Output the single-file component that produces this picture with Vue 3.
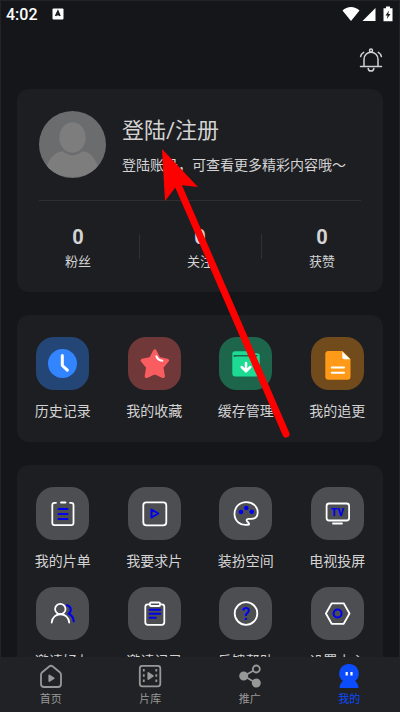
<script setup>
const stats = [
  { label: '粉丝', value: 0 },
  { label: '关注', value: 0 },
  { label: '获赞', value: 0 },
]
const shortcuts = [
  { id: 'history', label: '历史记录' },
  { id: 'favorite', label: '我的收藏' },
  { id: 'cache', label: '缓存管理' },
  { id: 'follow', label: '我的追更' },
]
const tools = [
  { id: 'list', label: '我的片单' },
  { id: 'request', label: '我要求片' },
  { id: 'theme', label: '装扮空间' },
  { id: 'cast', label: '电视投屏' },
  { id: 'invite', label: '邀请好友' },
  { id: 'record', label: '邀请记录' },
  { id: 'help', label: '反馈帮助' },
  { id: 'settings', label: '设置中心' },
]
const tabs = [
  { id: 'home', label: '首页' },
  { id: 'library', label: '片库' },
  { id: 'share', label: '推广' },
  { id: 'mine', label: '我的' },
]
const activeTab = 'mine'
</script>

<template>
  <div class="page">
    <header class="status">
      <span class="time">4:02</span>
      <svg class="keyboard" viewBox="0 0 12 12" aria-hidden="true">
        <rect x="0.5" y="0.5" width="11" height="11" rx="1" fill="#fff" />
        <path d="M3.6 8 5.900 3.200 8 8M4.400 6.600H7.400" fill="none" stroke="#17181b" stroke-width="1.600" />
      </svg>
      <svg class="signals" viewBox="0 0 52 16" aria-hidden="true">
        <path d="M0.5 4.500C5-.2 13-.2 17.500 4.500L9 15Z" fill="#fff" />
        <path d="M20.500 15 33.500 2V15Z" fill="#fff" />
        <path d="M44 .5h4v1.700h2.500V15.300H41.500V2.200H44Z" fill="#fff" />
        <path d="M47 4.500 43.500 9.500H45.600L44.800 13 48.500 8H46.300Z" fill="#17181b" />
      </svg>
    </header>

    <main class="content">
      <div class="toolbar">
        <button class="bell" type="button" aria-label="消息">
          <svg viewBox="0 0 24 24" fill="none" stroke="#d0d0d0" stroke-width="1.500" stroke-linecap="round">
            <circle cx="12" cy="2.600" r="1.500" />
            <path d="M5 18.300V11.200a7 7 0 0 1 14 0V18.300M1.500 18.600h21M9.200 20.400c.2 3.600 5.400 3.600 5.600 0M4.700 4.400C3 5.400 1.900 6.900 1.600 8.600M19.300 4.400c1.700 1 2.800 2.500 3.100 4.200" />
          </svg>
        </button>
      </div>

      <section class="card profile">
        <a class="account" href="#login">
          <svg class="avatar" viewBox="0 0 66 66" aria-hidden="true">
            <defs><clipPath id="avatar-clip"><circle cx="33" cy="33" r="33" /></clipPath></defs>
            <circle cx="33" cy="33" r="33" fill="#6b6c6e" />
            <g clip-path="url(#avatar-clip)">
              <path d="M7 55C11 45 18 39 24 40c5 5 13 5 18 0 7-1 12 5 16 14-6 8-14 11-25 11S13 62 7 55Z" fill="#7d7d7e" />
              <ellipse cx="33" cy="27" rx="14" ry="16" fill="#6b6c6e" />
              <ellipse cx="33" cy="26" rx="13" ry="15" fill="#7d7d7e" />
            </g>
          </svg>
          <span class="intro">
            <span class="title">登陆/注册</span>
            <span class="hint">登陆账号，可查看更多精彩内容哦～</span>
          </span>
        </a>
        <div class="stats">
          <a v-for="s in stats" :key="s.label" class="stat" href="#stats">
            <strong>{{ s.value }}</strong>
            <span>{{ s.label }}</span>
          </a>
        </div>
      </section>

      <nav class="card grid">
        <button v-for="item in shortcuts" :key="item.id" class="entry" type="button">
          <svg class="tile" :class="item.id" viewBox="0 0 53 53" aria-hidden="true">
            <g v-if="item.id === 'history'">
              <circle cx="26.500" cy="26.500" r="14.500" fill="#3285ff" />
              <path d="M26.300 18.500V28.500L31.300 33.200" fill="none" stroke="#fff" stroke-width="3" stroke-linecap="round" stroke-linejoin="round" />
            </g>
            <g v-else-if="item.id === 'favorite'">
              <path d="M26.800 14 30.800 21.800 39.300 23.500 33.700 30.200 35.200 39.300 26.800 35.500 18.400 39.300 19.900 30.200 14.300 23.500 22.800 21.800Z" fill="#fa5d60" stroke="#fa5d60" stroke-width="3.500" stroke-linejoin="round" />
              <path d="M28.300 19.200C29.300 22 31.500 23.500 34.300 23.700" fill="none" stroke="#fff" stroke-width="2" stroke-linecap="round" />
            </g>
            <g v-else-if="item.id === 'cache'">
              <path d="M16 14.300H28L30.500 16.300H38A2.700 2.700 0 0 1 40.700 19V36.500A3 3 0 0 1 37.700 39.500H16.300A3 3 0 0 1 13.300 36.500V17A2.700 2.700 0 0 1 16 14.300Z" fill="#1ddb93" />
              <path d="M15.500 20V18.800H38.500" fill="none" stroke="#1d664c" stroke-width="1.600" />
              <path d="M27 26V34M22.700 30 27 34.300 31.300 30" fill="none" stroke="#fff" stroke-width="2.500" stroke-linecap="round" stroke-linejoin="round" />
            </g>
            <g v-else>
              <path d="M17.300 14H31.500L39.500 22V39.800A3 3 0 0 1 36.500 42.800H17.300A3 3 0 0 1 14.300 39.800V17A3 3 0 0 1 17.300 14Z" fill="#ff9a18" />
              <path d="M31.300 14.500 39.200 22.200H33.300A2 2 0 0 1 31.300 20.200Z" fill="#fff" />
              <path d="M20.800 30.500H33M20.800 35.800H33" stroke="#fff" stroke-width="2" stroke-linecap="round" />
            </g>
          </svg>
          <span>{{ item.label }}</span>
        </button>
      </nav>

      <nav class="card grid">
        <button v-for="item in tools" :key="item.id" class="entry" type="button">
          <svg class="tile" viewBox="0 0 53 53" fill="none" stroke="#fff" stroke-width="1.800" stroke-linecap="round" stroke-linejoin="round" aria-hidden="true">
            <g v-if="item.id === 'list'">
              <path d="M20 15.800H18.500A2.300 2.300 0 0 0 16.300 18V36A2.300 2.300 0 0 0 18.500 38.200H35.300A2.300 2.300 0 0 0 37.500 36V18A2.300 2.300 0 0 0 35.300 15.800H34M25 15.500H29.500" />
              <path class="accent" d="M22.500 22H31.500M22.500 27H31.500M22.500 32H31.500" />
            </g>
            <g v-else-if="item.id === 'request'">
              <rect x="15.300" y="15.300" width="23" height="23" rx="3" />
              <path class="accent" d="M23.500 22.500 30.300 26.500 23.500 30.500Z" />
            </g>
            <g v-else-if="item.id === 'theme'">
              <path d="M30 37.500C21 39.500 15.500 33.500 15.500 27 15.500 20 20.500 15.200 27.300 15.200 34 15.200 38.700 19.800 38.700 25.200 38.700 29.500 36 31.800 32 31.800H29.500C27.500 31.800 27 33.500 28.500 34.800 30.200 36 30.300 37.200 29.500 37.600Z" />
              <g class="dots">
                <circle cx="22" cy="25" r="2.300" /><circle cx="27.300" cy="21" r="2.300" /><circle cx="32.700" cy="24.800" r="2.300" />
              </g>
            </g>
            <g v-else-if="item.id === 'cast'">
              <rect x="15.600" y="16.500" width="22.500" height="17" rx="2.500" />
              <path d="M22 36.500H31" />
              <text class="glyph tv" x="26.500" y="28.500">TV</text>
            </g>
            <g v-else-if="item.id === 'invite'">
              <path class="accent" d="M31 18.300C35.500 19.500 36 24.500 32.500 26.700 35.700 28 37.500 31 37.800 34.300" />
              <circle cx="24.300" cy="22" r="5.200" />
              <path d="M15.700 35.500C16.200 24.500 32.700 24.500 33.200 35.500" />
            </g>
            <g v-else-if="item.id === 'record'">
              <rect x="17.300" y="17.300" width="19" height="20.500" rx="2.500" />
              <rect x="22" y="15.500" width="10" height="3.500" rx="1" fill="#4d4e51" />
              <path class="accent" d="M21.500 22.800H32.300M21.500 26.800H32.300M21.500 30.800H27.800" />
            </g>
            <g v-else-if="item.id === 'help'">
              <circle cx="27" cy="26.500" r="11.300" />
              <text class="glyph question" x="27" y="33">?</text>
            </g>
            <g v-else>
              <path d="M20.700 16.300H32.700L38.500 26.500 32.700 36.800H20.700L14.900 26.500Z" />
              <circle class="accent" cx="26.600" cy="26.500" r="4" />
            </g>
          </svg>
          <span>{{ item.label }}</span>
        </button>
      </nav>
    </main>

    <nav class="tabbar">
      <a v-for="tab in tabs" :key="tab.id" class="tab" :class="{ active: tab.id === activeTab }" :href="'#' + tab.id">
        <svg viewBox="0 0 24 24" fill="none" stroke="currentColor" stroke-width="1.800" stroke-linejoin="round" aria-hidden="true">
          <g v-if="tab.id === 'home'">
            <path d="M3.200 8.300 10.500 2.300Q12 1.200 13.500 2.300L20.800 8.300Q22 9.300 22 10.800V20Q22 23 19 23H5Q2 23 2 20V10.800Q2 9.300 3.200 8.300Z" />
            <path d="M10.300 11.500 14.700 14.200 10.300 17Z" fill="currentColor" />
          </g>
          <g v-else-if="tab.id === 'library'">
            <rect x="1.800" y="1.800" width="20.500" height="20.500" rx="2.500" />
            <path d="M5.800 5V19.500M18.300 5V19.500" stroke-dasharray="2.500 2.800" />
            <path d="M10.300 9 14.800 12 10.300 15Z" fill="currentColor" />
          </g>
          <g v-else-if="tab.id === 'share'">
            <path d="M15.300 6.800 6 12 18 19" />
            <circle cx="18.300" cy="5" r="3.500" />
            <circle cx="5.700" cy="12" r="3.600" fill="currentColor" /><circle cx="18.300" cy="19" r="3.600" fill="currentColor" />
          </g>
          <g v-else stroke="none">
            <path d="M12 0A9.500 9.500 0 0 0 6 17C3.800 18.500 2.700 21 2.500 24H21.500C21.300 21 20.200 18.500 18 17A9.500 9.500 0 0 0 12 0Z" fill="currentColor" />
            <path d="M8.600 8H10.800V11.500H8.600ZM13.400 8H15.600V11.500H13.400Z" fill="#fff" />
          </g>
        </svg>
        <span>{{ tab.label }}</span>
      </a>
    </nav>

    <svg class="pointer" viewBox="0 0 130 290" aria-hidden="true">
      <path d="M18 36 126 285" stroke="#f00" stroke-width="7" stroke-linecap="round" />
      <path d="M2 0 38 38 20 36 15 39 5 52Z" fill="#f00" />
    </svg>
  </div>
</template>

<style>
body {
  background: #151619;
}
</style>

<style scoped>
.page {
  box-sizing: border-box;
  position: relative;
  display: flex;
  flex-direction: column;
  height: 100vh;
  overflow: hidden;
  border: 1px solid #222326;
  background: #151619;
  color: #d3d3d4;
  font-family: Roboto, "Noto Sans CJK SC", sans-serif;
}
a {
  color: inherit;
  text-decoration: none;
}
button {
  padding: 0;
  border: 0;
  background: none;
  color: inherit;
  font-family: inherit;
  cursor: pointer;
}
svg {
  display: block;
}
.status {
  flex: none;
  display: flex;
  align-items: center;
  height: 26px;
  padding: 0 5px;
}
.time {
  color: #fff;
  font-size: 16px;
  font-weight: 500;
}
.keyboard {
  width: 12px;
  height: 12px;
  margin-left: 14px;
}
.signals {
  width: 52px;
  height: 16px;
  margin-left: auto;
}
.content {
  flex: 1;
  min-height: 0;
  display: flex;
  flex-direction: column;
  gap: 23px;
  overflow: hidden;
  padding: 0 16px;
}
.toolbar {
  flex: none;
  display: flex;
  justify-content: flex-end;
  padding-top: 21px;
  margin-bottom: -6px;
}
.bell svg {
  width: 24px;
  height: 24px;
}
.card {
  flex: none;
  border-radius: 12px;
  background: #1d1e21;
}
.profile {
  padding: 22px 0 20px;
}
.account {
  display: flex;
  align-items: center;
  gap: 16px;
  margin: 0 22px;
  padding-bottom: 22px;
  border-bottom: 1px solid #2d2e30;
}
.avatar {
  flex: none;
  width: 67px;
  height: 67px;
}
.intro {
  display: flex;
  flex-direction: column;
  gap: 8px;
  padding-top: 2px;
}
.title {
  font-size: 22px;
  line-height: 30px;
}
.hint {
  font-size: 14px;
  line-height: 22px;
  white-space: nowrap;
}
.stats {
  display: grid;
  grid-template-columns: repeat(3, 1fr);
  padding-top: 24px;
}
.stat {
  position: relative;
  display: flex;
  flex-direction: column;
  align-items: center;
  gap: 3px;
  font-size: 13px;
  line-height: 20px;
}
.stat strong {
  font-size: 20px;
  line-height: 24px;
}
.stat + .stat::before {
  content: "";
  position: absolute;
  top: 9px;
  left: 0;
  width: 1px;
  height: 25px;
  background: #303133;
}
.grid {
  display: grid;
  grid-template-columns: repeat(4, 1fr);
  row-gap: 16px;
  padding: 22px 0 21px;
}
.entry {
  display: flex;
  flex-direction: column;
  align-items: center;
  gap: 11px;
  font-size: 14px;
  line-height: 20px;
}
.tile {
  width: 53px;
  height: 53px;
  border-radius: 18px;
  background: #4d4e51;
}
.history {
  background: #244677;
}
.favorite {
  background: #703839;
}
.cache {
  background: #1d664c;
}
.follow {
  background: #714b1c;
}
.accent {
  stroke: #0000f0;
  stroke-width: 2;
}
.dots {
  fill: #0000f0;
  stroke: none;
}
.glyph {
  fill: #0000f0;
  stroke: none;
  text-anchor: middle;
  font-family: Roboto, sans-serif;
}
.tv {
  font-size: 10px;
  font-weight: 900;
}
.question {
  font-size: 18px;
  font-weight: 500;
}
.tabbar {
  flex: none;
  display: grid;
  grid-template-columns: repeat(4, 1fr);
  padding: 7px 0 3px;
  background: #212225;
}
.tab {
  display: flex;
  flex-direction: column;
  align-items: center;
  gap: 4px;
  color: #989898;
  font-size: 11px;
  line-height: 16px;
}
.tab svg {
  width: 24px;
  height: 24px;
}
.active {
  color: #0b4cff;
}
.pointer {
  position: absolute;
  top: 148px;
  left: 159px;
  width: 130px;
  height: 290px;
  pointer-events: none;
}
</style>
